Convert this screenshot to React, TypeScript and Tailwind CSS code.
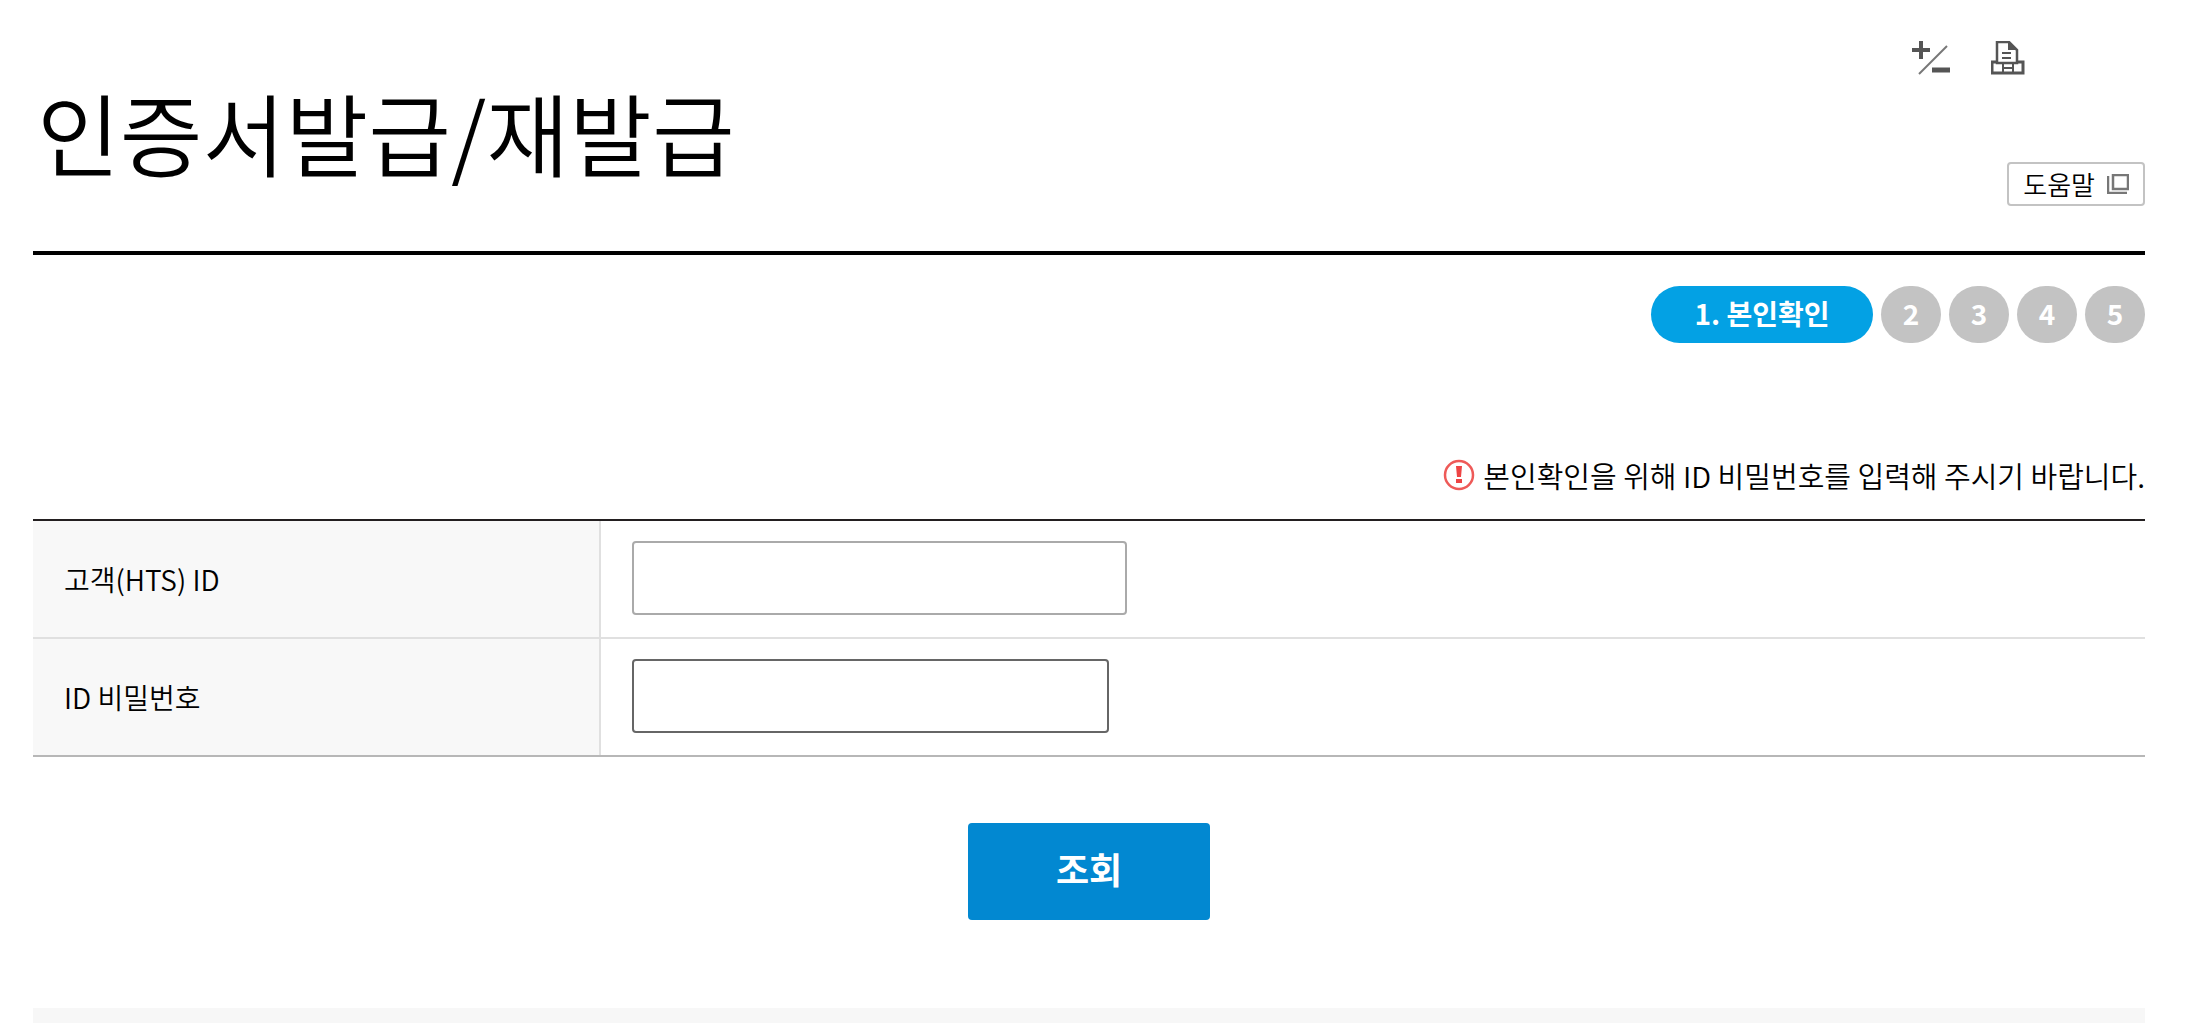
import { useState } from 'react';
import type { FormEvent } from 'react';

const STEPS = ['본인확인', '약관동의', '정보입력', '인증서발급', '완료'];
const CURRENT_STEP = 1;

function PlusMinusIcon() {
  return (
    <svg width="38" height="34" viewBox="0 0 38 34" fill="none" aria-hidden="true">
      <path d="M9 0v18M0 9h18" stroke="#555" strokeWidth="4" />
      <path d="M35 5L7 33" stroke="#777" strokeWidth="2" />
      <path d="M20 29h18" stroke="#555" strokeWidth="5" />
    </svg>
  );
}

function PrintIcon() {
  return (
    <svg width="34" height="34" viewBox="0 0 34 34" fill="none" stroke="#555" aria-hidden="true">
      <path d="M6 22V1h12l8 8v13z" strokeWidth="2.5" />
      <path d="M17 0l9 9h-9z" fill="#555" stroke="none" />
      <path d="M11 12h9M11 17h9" strokeWidth="2" />
      <path d="M5 21H1v11h31V21h-5" strokeWidth="3" />
      <path d="M12 23v9M22 23v9M12 27h10" strokeWidth="2" />
    </svg>
  );
}

function NewWindowIcon() {
  return (
    <svg width="22" height="20" viewBox="0 0 22 20" fill="none" stroke="#777" aria-hidden="true">
      <path d="M6 1h15v14H6z" strokeWidth="2.5" />
      <path d="M1 2v17h19" strokeWidth="2.5" />
    </svg>
  );
}

function AlertIcon() {
  return (
    <svg width="32" height="32" viewBox="0 0 32 32" fill="none" aria-hidden="true">
      <circle cx="16" cy="16" r="14" stroke="#ee5a58" strokeWidth="2.5" />
      <path d="M13 7h6l-1 11h-4z" fill="#ee4444" />
      <path d="M13 20h6v4h-6z" fill="#ee4444" />
    </svg>
  );
}

export default function App() {
  const [form, setForm] = useState({ userId: '', password: '' });

  const handleSubmit = (e: FormEvent) => {
    e.preventDefault();
  };

  return (
    <div className="min-h-screen flex flex-col bg-white pl-[33px] pr-[42px] text-black font-['Noto_Sans_CJK_KR',sans-serif]">
      {/* Header */}
      <header className="flex justify-between border-b-4 border-black pt-[41px] pb-[45px]">
        <h1 className="pl-1 pt-5 pb-[5px] text-[90px] leading-[140px] font-[350]">인증서발급/재발급</h1>
        <div className="flex flex-col items-end justify-between">
          <div className="flex gap-[41px] pr-[120px]">
            <button type="button" aria-label="글자 크기">
              <PlusMinusIcon />
            </button>
            <button type="button" aria-label="인쇄">
              <PrintIcon />
            </button>
          </div>
          <button
            type="button"
            className="flex items-center gap-3 h-11 px-3.5 border-2 border-[#c3c3c3] rounded text-[26px] leading-9 font-[350]"
          >
            도움말
            <NewWindowIcon />
          </button>
        </div>
      </header>

      {/* Steps */}
      <ol className="mt-[31px] flex justify-end gap-2 text-[28px] leading-[54px] font-bold text-white text-center">
        {STEPS.map((step, index) => {
          const no = index + 1;
          return no === CURRENT_STEP ? (
            <li key={step} aria-current="step" className="w-[222px] h-[57px] rounded-full bg-[#03a1e4]">
              {no}. {step}
            </li>
          ) : (
            <li key={step} className="w-[60px] h-[57px] rounded-full bg-[#c3c3c3]">
              {no}
            </li>
          );
        })}
      </ol>

      <form onSubmit={handleSubmit}>
        <p className="mt-[108px] mb-[20px] flex items-center justify-end gap-2 text-[29px] leading-12 font-[350]">
          <AlertIcon />
          본인확인을 위해 ID 비밀번호를 입력해 주시기 바랍니다.
        </p>

        <table className="w-full border-separate border-spacing-0 border-t-2 border-b-2 border-t-[#231f20] border-b-[#b7b7b7] text-[28px]">
          <tbody>
            <tr>
              <th scope="row" className="w-[568px] border-r-2 border-b-2 border-[#e0e0e0] bg-[#f8f8f8] pl-[31px] text-left font-[350]">
                <label htmlFor="userId">고객(HTS) ID</label>
              </th>
              <td className="border-b-2 border-[#e0e0e0] pt-5 pb-[22px] pl-[31px]">
                <input
                  id="userId"
                  type="text"
                  value={form.userId}
                  onChange={(e) => setForm({ ...form, userId: e.target.value })}
                  className="block w-[495px] h-[74px] px-4 border-2 border-[#aaaaaa] rounded outline-none"
                />
              </td>
            </tr>
            <tr>
              <th scope="row" className="border-r-2 border-[#e0e0e0] bg-[#f8f8f8] pl-[31px] text-left font-[350]">
                <label htmlFor="password">ID 비밀번호</label>
              </th>
              <td className="pt-5 pb-[22px] pl-[31px]">
                <input
                  id="password"
                  type="password"
                  value={form.password}
                  onChange={(e) => setForm({ ...form, password: e.target.value })}
                  className="block w-[477px] h-[74px] px-4 border-2 border-[#666666] rounded outline-none"
                />
              </td>
            </tr>
          </tbody>
        </table>

        <div className="mt-[66px] mb-[88px] flex justify-center">
          <button
            type="submit"
            className="w-[242px] h-[97px] pb-2 rounded bg-[#0288d1] text-[36px] leading-12 font-bold text-white"
          >
            조회
          </button>
        </div>
      </form>

      {/* Guide panel */}
      <section className="flex-1 bg-[#f7f7f7]" />
    </div>
  );
}
